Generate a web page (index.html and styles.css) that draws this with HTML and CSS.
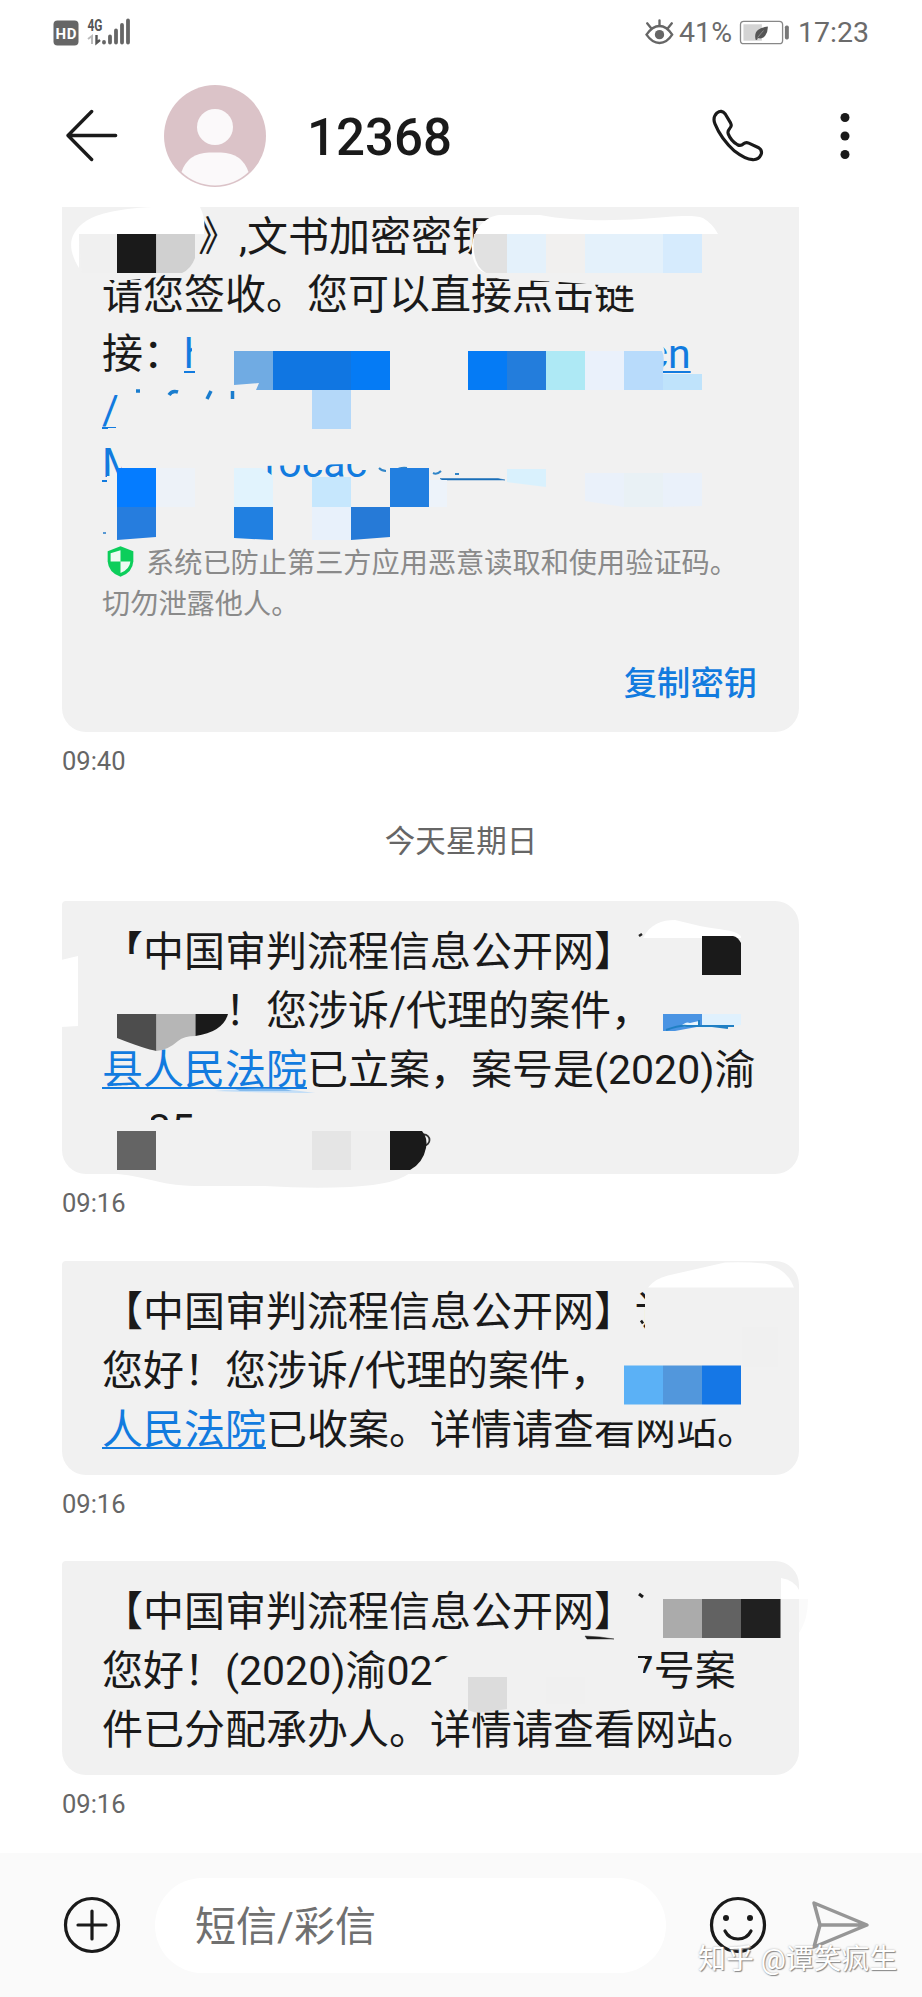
FILE: index.html
```html
<!DOCTYPE html>
<html lang="zh-CN">
<head>
<meta charset="utf-8">
<title>12368</title>
<link rel="stylesheet" href="styles.css">
</head>
<body>
<div class="status">
  <div class="status-side">
    <svg class="hd" viewBox="0 0 26 26"><rect x=".5" y=".5" width="25" height="25" rx="4" fill="#666"/><text x="13" y="18.6" text-anchor="middle" textLength="21" class="hd-text">HD</text></svg>
    <svg class="signal" viewBox="87 17 45 29">
      <text x="87.500" y="30.500" textLength="15" lengthAdjust="spacingAndGlyphs" class="net-text">4G</text>
      <path d="M88 39l4-3v8" fill="none" stroke="#bbb" stroke-width="2"/>
      <path d="M96.500 35v8l3.500-3" fill="none" stroke="#555" stroke-width="2.400"/>
      <path d="M104 42v.5M110 36.500v6M116 30.500v12M122 25v17.500M128 20.500v22" stroke="#666" stroke-width="3.800" stroke-linecap="round"/>
    </svg>
  </div>
  <div class="status-side">
    <svg class="eye" viewBox="553 56 86 78" fill="none" stroke="#666"><path d="M557 103Q575 77 596 77T634 103Q618 128 596 128T557 103Z" stroke-width="7"/><circle cx="596" cy="103" r="14" fill="#666" stroke="none"/><path d="M596 77V60M571 84L559 69M621 84L633 69" stroke-width="7" stroke-linecap="round"/></svg>
    <span class="percent">41%</span>
    <svg class="battery" viewBox="836 58 152 76"><rect x="839" y="62" width="128" height="68" rx="10" fill="#fff" stroke="#888" stroke-width="4"/><path d="M848 71h56v50h-56z" fill="#d4d4d4"/><path d="M885 118Q880 98 893 88Q904 80 922 78Q923 94 914 106Q906 117 892 113L889 119Z" fill="#555"/><path d="M891 111L909 90" stroke="#aaa" stroke-width="2"/><rect x="974" y="75" width="12" height="42" rx="5" fill="#777"/></svg>
    <span class="clock">17:23</span>
  </div>
</div>

<header class="header">
  <svg class="back" viewBox="200 328 156 158" fill="none" stroke="#1a1a1a" stroke-width="10" stroke-linecap="round" stroke-linejoin="round"><path d="M277 335L206 407L277 479M206 407H349"/></svg>
  <svg class="avatar" viewBox="0 0 102 102"><circle cx="51" cy="51" r="51" fill="#dbc3c8"/><circle cx="51" cy="42" r="18" fill="#fbf9fa"/><path d="M17.500 87Q24 68 45 67.500H57Q78 68 84.500 87A48.500 48.500 0 0 1 17.500 87Z" fill="#fbf9fa"/></svg>
  <h1 class="title">12368</h1>
  <svg class="phone" viewBox="753 325 158 160" fill="none" stroke="#1a1a1a" stroke-width="9.500" stroke-linejoin="round"><path d="M764 370Q756 351 770 337Q784 326 795 340L811 367Q816 376 809 383Q801 392 804 400Q812 421 832 433Q842 438 850 430Q857 424 866 428L896 442Q908 450 903 463Q896 479 878 478Q855 477 823 452Q782 415 764 370Z"/></svg>
  <svg class="more" viewBox="0 0 10 48" fill="#1a1a1a"><circle cx="5" cy="5.500" r="4.500"/><circle cx="5" cy="24" r="4.500"/><circle cx="5" cy="42.500" r="4.500"/></svg>
</header>

<main class="thread">
  <section class="bubble bubble-first">
    <p class="line"><i class="gap gap-96"></i>》,文书加密密钥</p>
    <p class="line">请您签收。您可以直接点击链</p>
    <p class="line">接：<a class="link">h<i class="gap gap-440"></i>cn</a></p>
    <p class="line url"><a class="link">/</a></p>
    <p class="line url"><a class="link">M</a><i class="gap gap-127"></i><a class="link plain">rocac</a></p>
    <p class="line url"></p>
    <p class="hint"><svg class="shield" viewBox="172 46 82 94"><path d="M213 47L252 62V92Q250 126 213 139Q176 126 174 92V62Z" fill="#0cce5b"/><path d="M213 59V93H183V68ZM213 93H243Q241 117 213 128Z" fill="#effaf3"/></svg>系统已防止第三方应用恶意读取和使用验证码。</p>
    <p class="hint">切勿泄露他人。</p>
    <div class="action">复制密钥</div>
    <svg class="cover" viewBox="62 207 737 525">
      <g fill="#f1f1f1">
        <path d="M103 274H166L160 277L130 280H104ZM480 274H640V286L600 285L560 282L500 279Z"/>
        <path d="M192 333H212V376H195V370H192ZM212 368H663V378H212ZM645 340H658Q668 350 663 357V370H645Z"/>
        <path d="M118 391H140V432H108V428H116Z"/>
        <path d="M118 440H145V485H107V476H122V466ZM262 440H372V466L350 464L262 466Z"/>
      </g>
      <path d="M79 268C68 250 67 234 86 221C102 211 130 208 152 207H200Q206 219 204 232V234H79Z" fill="#fff"/>
      <path d="M79 234H117V273H82Z" fill="#f0f0f0"/>
      <path d="M117 234h39.300v39H117z" fill="#1a1a1a"/>
      <path d="M156.300 234H195V258Q191 269 182 273H156.300Z" fill="#d0d0d0"/>
      <path d="M472 254C470 232 484 216 500 215H540C570 221 610 221 640 219C670 217 692 214 703 218Q713 224 718 234H507V273H486Q475 270 472 254Z" fill="#fff"/>
      <path d="M474 234H507V273H486Q471 265 474 234Z" fill="#e1e1e1"/>
      <path d="M507 234h39v39h-39zM585 234h78v39h-78z" fill="#e4f1fb"/>
      <path d="M546 234h39v39h-39z" fill="#f1f0ef"/>
      <path d="M663 234h39v39h-39z" fill="#d6ebfd"/>
      <path d="M234 351H273V390H256L259 383L234 385Z" fill="#70abe3"/>
      <path d="M273 351h78v39h-78z" fill="#1076e2"/>
      <path d="M351 351h39v39h-39zM468 351h39v39h-39z" fill="#057bf5"/>
      <path d="M507 351h39v39h-39z" fill="#237ddc"/>
      <path d="M546 351h39v39h-39z" fill="#aee9f5"/>
      <path d="M585 351h39v39h-39z" fill="#eaf1fb"/>
      <path d="M624 351H662Q665 357 663 371V390H624Z" fill="#b8dbfb"/>
      <path d="M663 374h39v16h-39z" fill="#bfe3fb"/>
      <path d="M312 390h39v39h-39z" fill="#b4d8f9"/>
      <path d="M136 391h4M169 395Q172 390 178 392M207 399L211 391M232.500 391V399" stroke="#1a7dce" stroke-width="3.500" fill="none"/>
      <path d="M379 468Q382 471 386 471M395 471Q400 467 407 468M433 473Q437 475 441 471M455 474h4" stroke="#3185c8" stroke-width="2" fill="none"/>
      <path d="M440 478.500H498L505 480H442Z" fill="#1a6fb8" stroke="#1a6fb8" stroke-width=".5"/>
      <path d="M117 468h39v39h-39z" fill="#057cff"/>
      <path d="M156 468h39v39h-39z" fill="#edf2f8"/>
      <path d="M234 468h28l11 8v31h-39z" fill="#e1f3fd"/>
      <path d="M312 477h39v30h-39z" fill="#c6e7fd"/>
      <path d="M390 468h39v39h-39z" fill="#227fe0"/>
      <path d="M429 480h18v27h-18z" fill="#edf3fa"/>
      <path d="M507 469h39v18l-39-5z" fill="#d9f1fd"/>
      <path d="M585 473h39v34l-39-6zM663 473h39v33l-39 1z" fill="#eaf1fa"/>
      <path d="M624 473h39v34h-39z" fill="#e9f1f5"/>
      <path d="M117 507H156V537L117 540Z" fill="#267dde"/>
      <path d="M234 507h39v33l-39-2z" fill="#2180e1"/>
      <path d="M312 507h39v33h-39z" fill="#e8f1fb"/>
      <path d="M351 507h39v30l-39 3z" fill="#267ad7"/>
      <path d="M103 533h3" stroke="#247ac8" stroke-width="1.500"/>
    </svg>
  </section>
  <time class="stamp">09:40</time>
  <div class="day">今天星期日</div>

  <section class="bubble">
    <p class="line">【中国审判流程信息公开网】</p>
    <p class="line"><i class="gap gap-123"></i>！您涉诉/代理的案件，</p>
    <p class="line"><a class="link">县人民法院</a>已立案，案号是(2020)渝</p>
    <p class="line">0235</p>
    <svg class="cover" viewBox="62 901 737 273">
      <path d="M61 960L78 956V1026L61 1027Z" fill="#fff"/>
      <path d="M118 954H142V975H118ZM103 1105H151V1150H103ZM150 1120H200V1150H150Z" fill="#f1f1f1"/>
      <path d="M643 938C650 924 662 920 675 920L700 926C718 930 734 929 741 936V938Z" fill="#fff"/>
      <path d="M702 936H733Q738 937 741 943V975H702Z" fill="#1a1a1a"/>
      <path d="M639 936l3-2" stroke="#222" stroke-width="2.500"/>
      <path d="M117 1014H156.500V1051Q145 1049 117 1038Z" fill="#4d4d4d"/>
      <path d="M156.500 1014H195.500V1036Q184 1036 178 1041Q168 1050 156.500 1051Z" fill="#b6b6b6"/>
      <path d="M195.500 1014H228Q223 1032 195.500 1036Z" fill="#1a1a1a"/>
      <path d="M702 1014h39v11l-39 3z" fill="#e0f1fd"/>
      <path d="M663 1014H702V1026L675 1031H663Z" fill="#4a94e3"/>
      <path d="M681 1026Q686 1021 690 1023L699 1021V1025L688 1027Z" fill="#eaf6fd"/>
      <path d="M666 1030Q680 1025 687 1026H734M699 1020V1026M712 1026L728 1028" stroke="#2080c4" stroke-width="2" fill="none"/>
      <path d="M215 1091Q245 1088 285 1089L315 1093Q270 1093 215 1091Z" fill="#c3def7"/>
      <path d="M235 1089H285L292 1091H240Z" fill="#85bbed"/>
      <path d="M117 1131h39v39h-39z" fill="#646464"/>
      <path d="M312 1131h39v39h-39z" fill="#e5e5e5"/>
      <path d="M351 1131h39v39h-39z" fill="#efefef"/>
      <circle cx="424" cy="1140" r="5.500" fill="none" stroke="#333" stroke-width="1.800"/>
      <path d="M390 1131H422Q428 1138 426 1148Q423 1163 410 1170H390Z" fill="#1a1a1a"/>
      <path d="M108 1173C150 1176 155 1185 195 1186H265Q310 1189 350 1187C385 1185 400 1180 410 1173Z" fill="#f1f1f1"/>
    </svg>
  </section>
  <time class="stamp">09:16</time>

  <section class="bubble bubble-next">
    <p class="line">【中国审判流程信息公开网】讠</p>
    <p class="line">您好！您涉诉/代理的案件，</p>
    <p class="line"><a class="link">人民法院</a>已收案。详情请查看网站。</p>
    <svg class="cover" viewBox="62 1261 737 213">
      <path d="M645 1288H690V1335H645ZM636 1310H641V1325H636ZM595 1405H718V1418L690 1420L630 1420L608 1422L595 1417Z" fill="#f1f1f1"/>
      <path d="M641 1320l2 3" stroke="#1a1a1a" stroke-width="2.500"/>
      <path d="M648 1287Q655 1278 668 1275L725 1262Q745 1261 765 1263Q787 1268 794 1287Z" fill="#fff"/>
      <path d="M742 1327h36v39h-36z" fill="#f0f0f0"/>
      <path d="M624 1365h39v39h-39z" fill="#5bb1f6"/><path d="M663 1365h39v39h-39z" fill="#5297dc"/><path d="M702 1365h39v39h-39z" fill="#1577e6"/>
    </svg>
  </section>
  <time class="stamp">09:16</time>

  <section class="bubble bubble-next">
    <p class="line">【中国审判流程信息公开网】</p>
    <p class="line">您好！(2020)渝022<i class="gap gap-175"></i>7号案</p>
    <p class="line">件已分配承办人。详情请查看网站。</p>
    <svg class="cover" viewBox="62 1561 737 214">
      <path d="M434 1662L440 1662L447 1657H460V1690H434ZM630 1650H638V1658H645L643 1673H652V1690H630Z" fill="#f1f1f1"/>
      <path d="M639 1594l4 3" stroke="#1a1a1a" stroke-width="3"/>
      <path d="M585 1636L600 1637L614 1639H587Z" fill="#1a1a1a" stroke="#333" stroke-width=".5"/>
      <path d="M781 1578Q794 1580 799 1590V1599H781Z" fill="#fff"/>
      <path d="M799 1599H808Q808 1620 799 1633Z" fill="#fafafa"/>
      <path d="M663 1599h39v39h-39z" fill="#ababab"/><path d="M702 1599h39v39h-39z" fill="#626262"/><path d="M741 1599h39.500v39h-39.500z" fill="#202020"/>
      <path d="M468 1677H507V1709L485 1712Q476 1714 468 1710Z" fill="#dcdcdc"/>
      <path d="M546 1677h39v27h-39z" fill="#f0f0f0"/>
    </svg>
  </section>
  <time class="stamp">09:16</time>
</main>

<footer class="composer">
  <svg class="plus" viewBox="0 0 58 58" fill="none" stroke="#1a1a1a" stroke-width="3.200" stroke-linecap="round"><circle cx="29" cy="29" r="26.500"/><path d="M29 15V43M15 29H43"/></svg>
  <div class="field">短信/彩信</div>
  <svg class="smile" viewBox="0 0 58 58" fill="none" stroke="#1a1a1a" stroke-width="3.200" stroke-linecap="round"><circle cx="29" cy="29" r="26.500"/><path d="M16 35Q20 43 29 43T42 35"/><circle cx="17" cy="22" r="3" fill="#1a1a1a" stroke="none"/><circle cx="41" cy="22" r="3" fill="#1a1a1a" stroke="none"/></svg>
  <svg class="send" viewBox="811 1900 60 50" fill="none" stroke="#969696" stroke-width="3.500" stroke-linejoin="round"><path d="M814 1903L867 1925L814 1947L820 1925ZM820 1925H867"/></svg>
  <div class="watermark">知乎 @谭笑疯生</div>
</footer>
</body>
</html>
```
FILE: styles.css
```css
* { box-sizing: border-box; margin: 0; padding: 0; }

body {
  width: 922px;
  height: 1997px;
  display: flex;
  flex-direction: column;
  overflow: hidden;
  background: #fff;
  color: #1a1a1a;
  font-family: Roboto, "Noto Sans CJK SC", sans-serif;
}

svg { display: block; flex: none; }

.status {
  height: 64px;
  padding: 0 53px 0 53px;
  display: flex;
  justify-content: space-between;
  color: #6b6b6b;
  font-size: 28.500px;
}
.status-side { display: flex; align-items: center; height: 65px; }
.hd { width: 26px; height: 26px; }
.hd-text { font: 700 15px Roboto, sans-serif; fill: #fff; }
.signal { width: 45px; height: 29px; margin-left: 8px; margin-top: -2px; }
.net-text { font: 700 16px Roboto, sans-serif; fill: #555; }
.eye { width: 29px; height: 26px; margin-top: -2px; }
.percent { margin-left: 5px; }
.battery { width: 51px; height: 25px; margin-left: 7px; margin-top: -1px; }
.clock { margin-left: 8px; }

.header {
  height: 143px;
  padding-left: 66px;
  display: flex;
  align-items: center;
}
.back { width: 52px; height: 53px; }
.avatar { width: 102px; height: 102px; margin-left: 46px; }
.title { margin-left: 41px; width: 404px; font-size: 51px; font-weight: 500; line-height: 60px; padding-top: 4px; }
.phone { width: 53px; height: 53px; }
.more { width: 10px; height: 48px; margin-left: 76px; }

.thread { flex: 1; padding: 0 62px; display: flex; flex-direction: column; align-items: flex-start; }

.bubble {
  position: relative;
  width: 737px;
  padding: 22px 0 15px 40px;
  border-radius: 4px 24px 24px 24px;
  background: #f1f1f1;
}
.bubble-first { height: 525px; padding-top: 1px; border-radius: 0 0 24px 24px; }
.bubble-first .line:first-child { height: 58px; line-height: 58px; }
.bubble-next { margin-top: 29px; }
.bubble-next ~ .bubble-next { margin-top: 28px; }
.line { height: 59px; line-height: 59px; font-size: 41px; white-space: nowrap; }
.url { height: 53px; line-height: 52px; }
.link { color: #127bdf; text-decoration: underline; text-decoration-thickness: 2px; text-underline-offset: 3px; }
.plain { text-decoration: none; }

.gap { display: inline-block; height: 1px; }
.gap-96 { width: 96px; }
.gap-123 { width: 123px; }
.gap-127 { width: 127px; }
.gap-175 { width: 175px; }
.gap-440 { width: 440px; }

.hint { height: 41px; display: flex; align-items: center; color: #8a8a8a; font-size: 28.200px; line-height: 41px; white-space: nowrap; }
.shield { width: 27px; height: 31px; margin: -4px 12px 0 5px; }
.action { margin: 36px 42px 0 0; text-align: right; color: #127bdf; font-size: 33.300px; font-weight: 500; line-height: 46px; }

.cover { position: absolute; inset: 0; width: 100%; height: 100%; overflow: visible; }

.stamp { height: 58px; line-height: 58px; font-size: 25.500px; color: #666; }
.day { width: 798px; height: 111px; line-height: 104px; text-align: center; font-size: 30.500px; color: #666; }

.composer {
  position: relative;
  height: 144px;
  padding-left: 63px;
  display: flex;
  align-items: center;
  background: #fafafa;
}
.field { width: 511px; height: 95px; margin-left: 34px; padding-left: 40px; border-radius: 48px; background: #fff; color: #707070; font-size: 41px; line-height: 98px; }
.smile { margin-left: 43px; }
.plus, .smile { width: 58px; height: 58px; }
.send { width: 60px; height: 50px; margin-left: 44px; }
.watermark { position: absolute; left: 698px; top: 88px; color: #fff; font-size: 27.900px; line-height: 38px; white-space: nowrap; text-shadow: 1px 1px 1px #888, 0 0 2px #aaa; }
```
